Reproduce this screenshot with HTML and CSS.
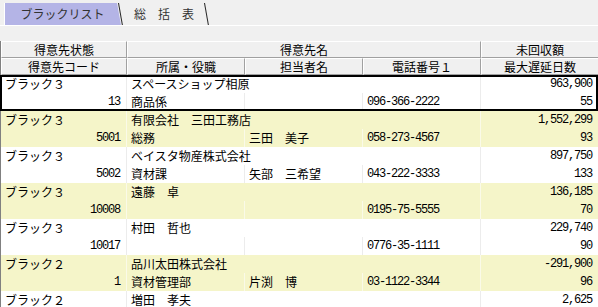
FILE: index.html
```html
<!DOCTYPE html>
<html lang="ja">
<head>
<meta charset="UTF-8">
<title>ブラックリスト</title>
<link rel="stylesheet" href="styles.css">
</head>
<body>
<div class="window">
    <div class="tabs">
        <div class="tab active">ブラックリスト</div>
        <div class="tab">総　括　表</div>
    </div>
    <div class="spacer"></div>

    <div class="head">
        <div class="hcell">得意先状態</div>
        <div class="hcell span3">得意先名</div>
        <div class="hcell">未回収額</div>
        <div class="hcell">得意先コード</div>
        <div class="hcell">所属・役職</div>
        <div class="hcell">担当者名</div>
        <div class="hcell">電話番号１</div>
        <div class="hcell">最大遅延日数</div>
    </div>

    <div class="list">
        <div class="record selected">
            <div class="cell">ブラック３</div>
            <div class="cell span3">スペースショップ相原</div>
            <div class="cell num">963,900</div>
            <div class="cell num">13</div>
            <div class="cell">商品係</div>
            <div class="cell"></div>
            <div class="cell num-left">096-366-2222</div>
            <div class="cell num">55</div>
        </div>
        <div class="record alt">
            <div class="cell">ブラック３</div>
            <div class="cell span3">有限会社　三田工務店</div>
            <div class="cell num">1,552,299</div>
            <div class="cell num">5001</div>
            <div class="cell">総務</div>
            <div class="cell">三田　美子</div>
            <div class="cell num-left">058-273-4567</div>
            <div class="cell num">93</div>
        </div>
        <div class="record">
            <div class="cell">ブラック３</div>
            <div class="cell span3">ベイスタ物産株式会社</div>
            <div class="cell num">897,750</div>
            <div class="cell num">5002</div>
            <div class="cell">資材課</div>
            <div class="cell">矢部　三希望</div>
            <div class="cell num-left">043-222-3333</div>
            <div class="cell num">133</div>
        </div>
        <div class="record alt">
            <div class="cell">ブラック３</div>
            <div class="cell span3">遠藤　卓</div>
            <div class="cell num">136,185</div>
            <div class="cell num">10008</div>
            <div class="cell"></div>
            <div class="cell"></div>
            <div class="cell num-left">0195-75-5555</div>
            <div class="cell num">70</div>
        </div>
        <div class="record">
            <div class="cell">ブラック３</div>
            <div class="cell span3">村田　哲也</div>
            <div class="cell num">229,740</div>
            <div class="cell num">10017</div>
            <div class="cell"></div>
            <div class="cell"></div>
            <div class="cell num-left">0776-35-1111</div>
            <div class="cell num">90</div>
        </div>
        <div class="record alt">
            <div class="cell">ブラック２</div>
            <div class="cell span3">品川太田株式会社</div>
            <div class="cell num">-291,900</div>
            <div class="cell num">1</div>
            <div class="cell">資材管理部</div>
            <div class="cell">片渕　博</div>
            <div class="cell num-left">03-1122-3344</div>
            <div class="cell num">96</div>
        </div>
        <div class="record">
            <div class="cell">ブラック２</div>
            <div class="cell span3">増田　孝夫</div>
            <div class="cell num">2,625</div>
            <div class="cell num">10002</div>
            <div class="cell"></div>
            <div class="cell"></div>
            <div class="cell num-left">0263-33-8888</div>
            <div class="cell num">132</div>
        </div>
    </div>
</div>
</body>
</html>
```

FILE: styles.css
```css
html, body {
    margin: 0;
    height: 100%;
    overflow: hidden;
}

body {
    font-family: "Noto Sans CJK JP", "Noto Sans", sans-serif;
    font-size: 12px;
    color: #000;
    background-color: #f0f0f0;
}

.window {
    width: 598px;
}

/* tab strip */
.tabs {
    display: flex;
    height: 25px;
    padding-left: 4px;
    align-items: flex-end;
    border-bottom: 1px solid #fff;
}

.tab {
    position: relative;
    height: 22px;
    line-height: 22px;
    text-align: center;
    color: #333;
}

.tab.active {
    width: 117px;
}

.tab.active::before {
    content: "";
    position: absolute;
    left: 0;
    top: 0;
    right: 0;
    bottom: 0;
    background-color: #b4b4e6;
    border-left: 1px solid #fff;
    clip-path: polygon(0 0, 113px 0, 117px 100%, 0 100%);
    z-index: -1;
}

.tab::after {
    content: "";
    position: absolute;
    right: 2px;
    top: 0;
    bottom: 0;
    border-right: 1px solid #222;
    transform: skewX(10deg);
    transform-origin: top;
}

.tab + .tab {
    width: 86px;
}

.spacer {
    height: 15px;
}

/* column headers */
.head {
    display: grid;
    grid-template-columns: 126px 118px 118px 118px 118px;
    grid-auto-rows: 17px;
    border-left: 1px solid #808080;
}

.hcell {
    box-sizing: border-box;
    line-height: 16px;
    text-align: center;
    background-color: #f0f0f0;
    border-top: 1px solid #fff;
    border-left: 1px solid #fff;
    border-right: 1px solid #a0a0a0;
    border-bottom: 1px solid #a0a0a0;
    white-space: nowrap;
    overflow: hidden;
}

.span3 {
    grid-column: span 3;
}

/* records */
.list {
    border-left: 1px solid #808080;
    background-color: #fff;
}

.record {
    position: relative;
    display: grid;
    grid-template-columns: 126px 118px 118px 118px 118px;
    grid-auto-rows: 18px;
    background-color: #fff;
}

.record.alt {
    background-color: #f5f5c9;
}

.record.selected::after {
    content: "";
    position: absolute;
    left: -1px;
    right: 0;
    top: 0;
    bottom: 0;
    border: 2px solid #000;
}

.cell {
    box-sizing: border-box;
    line-height: 18px;
    padding: 0 4px;
    border-right: 1px solid #ececec;
    white-space: nowrap;
    overflow: hidden;
}

.record.alt .cell {
    border-right-color: #fafae8;
}

.num, .num-left {
    font-family: "Liberation Mono", "DejaVu Sans Mono", monospace;
    font-size: 12px;
    letter-spacing: -1.2px;
}

.num {
    text-align: right;
    padding-right: 6px;
}
```
